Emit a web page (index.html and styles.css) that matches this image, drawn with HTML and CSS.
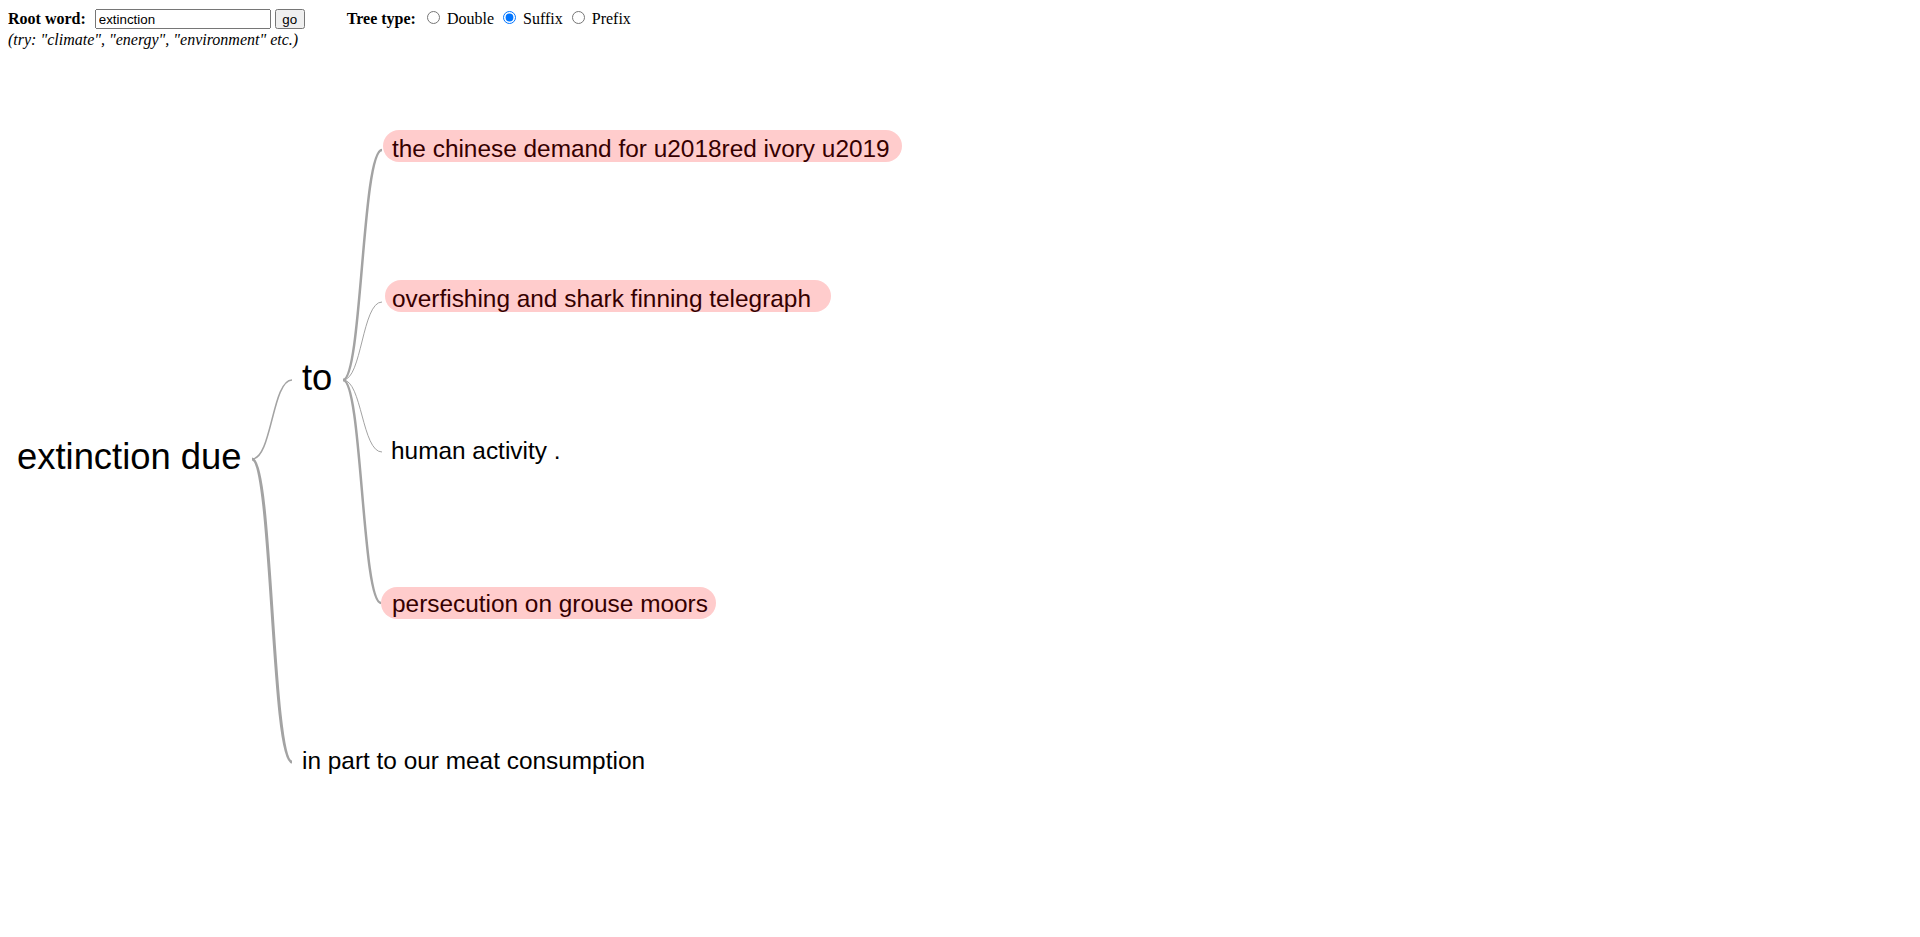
FILE: index.html
```html
<!DOCTYPE html>
<html>
<head>
<meta charset="utf-8">
<title>Word Tree</title>
<link rel="stylesheet" href="styles.css">
</head>
<body>
<form class="header">
  <div class="search">
    <div class="search-row"><b class="lbl">Root word:</b><input class="word" type="text" value="extinction"><button class="go" type="button">go</button></div>
    <i class="hint">(try: "climate", "energy", "environment" etc.)</i>
  </div>
  <div class="type"><b>Tree type:</b> <input type="radio" name="t"> Double <input type="radio" name="t" checked> Suffix <input type="radio" name="t"> Prefix</div>
</form>
<svg class="tree" width="1904" height="873" viewBox="8 56 1904 873" xmlns="http://www.w3.org/2000/svg">
  <g class="links">
    <path class="link w15" d="M252,459 C272,459 272,380 292,380"/>
    <path class="link w3" d="M252,459 C272,459 272,762 292,762"/>
    <path class="link w25" d="M343,380 C362,380 362,150 382,150"/>
    <path class="link w1" d="M343,380 C362,380 362,302 382,302"/>
    <path class="link w1" d="M343,380 C362,380 362,452 382,452"/>
    <path class="link w25" d="M343,380 C362,380 362,603 381,603"/>
  </g>
  <g class="nodes">
    <text class="big" x="17" y="469">extinction due</text>
    <text class="big" x="302" y="390">to</text>
    <text class="small" x="392" y="157">the chinese demand for u2018red ivory u2019</text>
    <text class="small" x="392" y="307">overfishing and shark finning telegraph</text>
    <text class="small" x="391" y="459">human activity .</text>
    <text class="small" x="392" y="612">persecution on grouse moors</text>
    <text class="small" x="302" y="769">in part to our meat consumption</text>
  </g>
  <g class="hl">
    <rect x="383" y="130" width="519" height="32" rx="16"/>
    <rect x="385" y="280" width="446" height="32" rx="16"/>
    <rect x="381" y="587" width="335" height="32" rx="16"/>
  </g>
</svg>
</body>
</html>
```
FILE: styles.css
```css
html, body {
  overflow: hidden;
}
body {
  margin: 8px;
  font-family: "Liberation Serif", "Times New Roman", serif;
  font-size: 16px;
  color: #000;
  background: #fff;
}
.header {
  display: flex;
  align-items: flex-start;
  gap: 42px;
  height: 48px;
  margin: 0;
}
.search {
  display: flex;
  flex-direction: column;
}
.search-row {
  display: flex;
  align-items: center;
  height: 22px;
}
.lbl {
  margin-right: 9px;
}
.word {
  box-sizing: border-box;
  width: 176px;
  height: 20px;
  margin: 0 4px 0 0;
  font-family: "Liberation Sans", Arial, sans-serif;
  font-size: 13.33px;
}
.go {
  box-sizing: border-box;
  width: 30px;
  height: 20px;
  padding: 0;
  font-family: "Liberation Sans", Arial, sans-serif;
  font-size: 13.33px;
}
.hint {
  line-height: 20px;
}
.type {
  line-height: 22px;
}
.type input {
  margin: 3px 3px 0 5px;
}
.type b {
  margin-right: 2px;
}
.tree {
  display: block;
}
.link {
  fill: none;
  stroke: #a3a3a3;
}
.w1 { stroke-width: 1; }
.w15 { stroke-width: 1.5; }
.w25 { stroke-width: 2.5; }
.w3 { stroke-width: 3; }
.nodes text {
  font-family: "Liberation Sans", Arial, sans-serif;
  fill: #000;
}
.big { font-size: 36.4px; }
.small { font-size: 24.4px; }
.hl rect {
  fill: #ff0000;
  fill-opacity: 0.2;
}
```
